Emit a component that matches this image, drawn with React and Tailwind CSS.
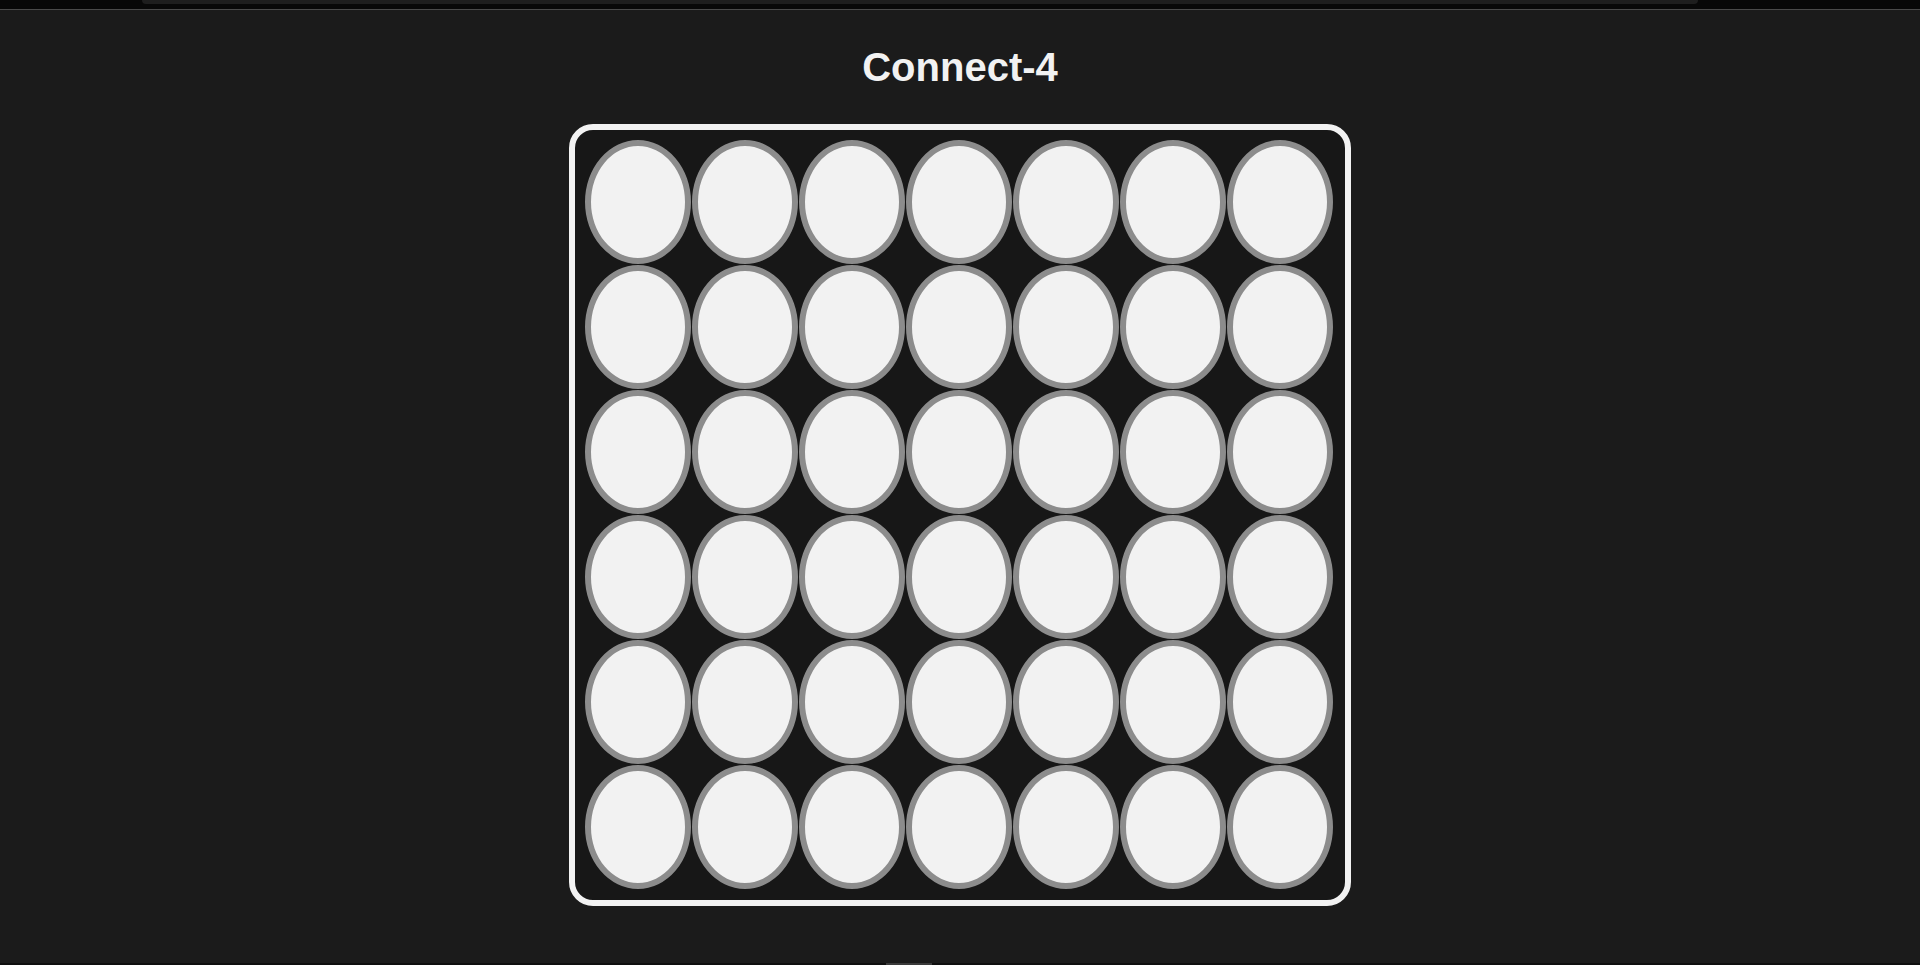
import React from "react";

const ROWS = 6;
const COLS = 7;

function Cell() {
  return (
    <div className="w-[106px] h-[124px] rounded-[50%] border-[6px] border-[#8c8c8c] bg-[#f2f2f2]" />
  );
}

export default function App() {
  const cells = Array.from({ length: ROWS * COLS }, (_, i) => i);

  return (
    <div
      className="h-[965px] overflow-hidden bg-[#1b1b1b] flex flex-col"
      style={{ fontFamily: '"Liberation Sans", Arial, sans-serif' }}
    >
      {/* top chrome strip */}
      <div className="h-[9px] bg-[#080808] flex">
        <div className="ml-[142px] w-[1556px] h-[4px] bg-[#1e1e1e] rounded-b-[6px]" />
      </div>
      <div className="h-px bg-[#4a4a4a]" />

      <h1 className="mt-[37px] text-center text-[40px] leading-none font-bold text-[#f2f2f2]">
        Connect-4
      </h1>

      <div className="mt-[37px] mx-auto w-[782px] h-[782px] border-[6px] border-[#f2f2f2] rounded-[24px] bg-[#171717] pt-[10px] pl-[10px]">
        <div className="grid grid-cols-[repeat(7,106px)] auto-rows-[124px] gap-[1px]">
          {cells.map(i => (
            <Cell key={i} />
          ))}
        </div>
      </div>

      <div className="flex-1" />
      <div className="h-[2px] bg-[#0f0f0f] flex">
        <div className="ml-[886px] w-[46px] bg-[#3a3a3a]" />
      </div>
    </div>
  );
}
